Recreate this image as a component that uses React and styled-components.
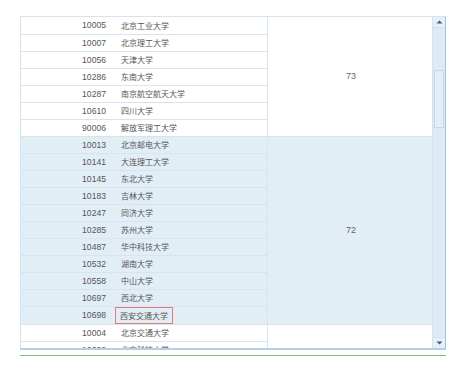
import React from "react";
import styled, { createGlobalStyle } from "styled-components";

const Global = createGlobalStyle`
  html, body { margin: 0; padding: 0; background: #ffffff; }
  body { font-family: "Liberation Sans", "Noto Sans CJK SC", sans-serif; }
`;

const Page = styled.div`
  padding: 16px 0 0 20px;
  width: 460px;
  height: 365px;
  box-sizing: border-box;
`;

const Frame = styled.div`
  width: 426px;
  height: 334px;
  box-sizing: border-box;
  display: flex;
  border-top: 1px solid #d4e3ee;
  border-left: 1px solid #d4e3ee;
  border-right: 1px solid #9fc3e3;
  border-bottom: 2px solid #b2d0ea;
  overflow: hidden;
`;

const GridArea = styled.div`
  flex: 1;
  overflow: hidden;
`;

const Table = styled.table`
  border-collapse: collapse;
  table-layout: fixed;
  width: 411px;
`;

const Row = styled.tr`
  height: 17px;
  background: ${(p) => (p.$band ? "#e2eef6" : "#ffffff")};
`;

const CodeCell = styled.td`
  width: 90px;
  height: 17px;
  padding: 0 5px 0 0;
  box-sizing: border-box;
  text-align: right;
  font-family: "Liberation Sans", sans-serif;
  font-size: 8.6px;
  color: #555;
  border-bottom: 1px solid #d5e4ef;
  white-space: nowrap;
`;

const NameCell = styled.td`
  width: 156px;
  height: 17px;
  padding: 0 0 0 10px;
  box-sizing: border-box;
  font-family: "Noto Sans CJK SC", sans-serif;
  font-size: 8px;
  color: #555;
  border-bottom: 1px solid #d5e4ef;
  border-right: 1px solid #d5e4ef;
  white-space: nowrap;
`;

const Marked = styled.span`
  display: inline-block;
  margin-left: -6px;
  padding: 0 4px;
  height: 17px;
  line-height: 15px;
  box-sizing: border-box;
  border: 1px solid #e57b7b;
  vertical-align: middle;
`;

const ScoreCell = styled.td`
  width: 165px;
  text-align: center;
  vertical-align: middle;
  font-family: "Liberation Sans", sans-serif;
  font-size: 9px;
  color: #666;
  border-bottom: 1px solid #d5e4ef;
  background: ${(p) => (p.$band ? "#e2eef6" : "#ffffff")};
`;

const Scrollbar = styled.div`
  width: 13px;
  flex: none;
  display: flex;
  flex-direction: column;
  background: #deebf5;
  border-left: 1px solid #d2e2ee;
  box-sizing: border-box;
`;

const ScrollButton = styled.div`
  height: 10px;
  display: flex;
  align-items: center;
  justify-content: center;
  border-bottom: ${(p) => (p.$up ? "1px solid #cfe0ee" : "none")};
  border-top: ${(p) => (p.$up ? "none" : "1px solid #cfe0ee")};
  background: #e6f0f8;
`;

const Track = styled.div`
  flex: 1;
  padding: 0 1px;
`;

const Thumb = styled.div`
  margin-top: 42px;
  height: 58px;
  border: 1px solid #c4d8e9;
  background: #e3eef7;
  box-sizing: border-box;
`;

const GreenLine = styled.div`
  margin-top: 5px;
  width: 426px;
  height: 1px;
  background: #86bb86;
`;

const groups = [
  {
    score: "73",
    band: false,
    rows: [
      ["10005", "北京工业大学"],
      ["10007", "北京理工大学"],
      ["10056", "天津大学"],
      ["10286", "东南大学"],
      ["10287", "南京航空航天大学"],
      ["10610", "四川大学"],
      ["90006", "解放军理工大学"],
    ],
  },
  {
    score: "72",
    band: true,
    rows: [
      ["10013", "北京邮电大学"],
      ["10141", "大连理工大学"],
      ["10145", "东北大学"],
      ["10183", "吉林大学"],
      ["10247", "同济大学"],
      ["10285", "苏州大学"],
      ["10487", "华中科技大学"],
      ["10532", "湖南大学"],
      ["10558", "中山大学"],
      ["10697", "西北大学"],
      ["10698", "西安交通大学", true],
    ],
  },
  {
    score: "",
    band: false,
    rows: [
      ["10004", "北京交通大学"],
      ["10008", "北京科技大学"],
    ],
  },
];

const Up = () => (
  <svg width="7" height="4" viewBox="0 0 7 4">
    <path d="M0.5 3.5 L3.5 0.5 L6.5 3.5 Z" fill="#3d5a80" />
  </svg>
);

const Down = () => (
  <svg width="7" height="4" viewBox="0 0 7 4">
    <path d="M0.5 0.5 L3.5 3.5 L6.5 0.5 Z" fill="#3d5a80" />
  </svg>
);

export default function App() {
  return (
    <Page>
      <Global />
      <Frame>
        <GridArea>
          <Table>
            <tbody>
              {groups.map((g) =>
                g.rows.map(([code, name, marked], i) => (
                  <Row key={code} $band={g.band}>
                    <CodeCell>{code}</CodeCell>
                    <NameCell>{marked ? <Marked>{name}</Marked> : name}</NameCell>
                    {i === 0 && (
                      <ScoreCell rowSpan={g.rows.length} $band={g.band}>
                        {g.score}
                      </ScoreCell>
                    )}
                  </Row>
                ))
              )}
            </tbody>
          </Table>
        </GridArea>
        <Scrollbar>
          <ScrollButton $up>
            <Up />
          </ScrollButton>
          <Track>
            <Thumb />
          </Track>
          <ScrollButton>
            <Down />
          </ScrollButton>
        </Scrollbar>
      </Frame>
      <GreenLine />
    </Page>
  );
}
